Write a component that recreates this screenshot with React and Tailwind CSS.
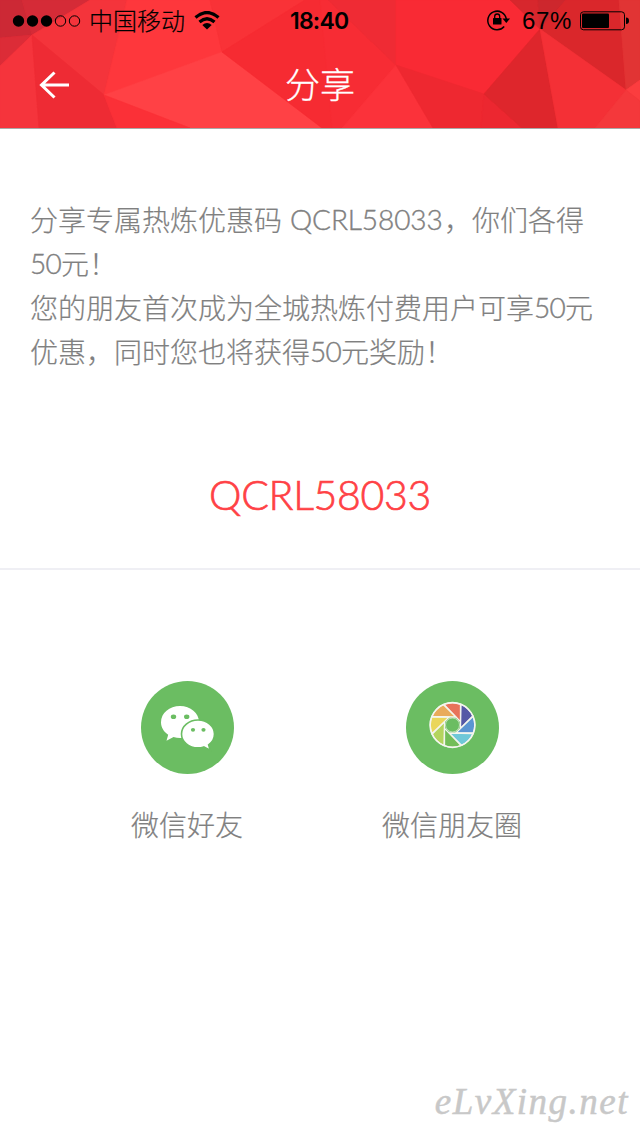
const facets = [
  {points: "0,0 22,0 32,35 0,38", fill: "#cc2935"},
  {points: "22,0 90,0 32,35", fill: "#d52b37"},
  {points: "0,38 32,35 0,66", fill: "#dc2c37"},
  {points: "0,66 32,35 39,128 0,128", fill: "#f5343c"},
  {points: "90,0 127,0 104,95 32,35", fill: "#f4343b"},
  {points: "32,35 104,95 117,128 39,128", fill: "#ee2b34"},
  {points: "127,0 210,0 222,52 104,95", fill: "#fe373c"},
  {points: "210,0 305,0 222,52", fill: "#f93237"},
  {points: "104,95 222,52 322,128 190,128", fill: "#ff4145"},
  {points: "104,95 190,128 117,128", fill: "#fb3037"},
  {points: "305,0 320,0 334,128 322,128 222,52", fill: "#f62b32"},
  {points: "320,0 328,0 396,65 342,128 332,128", fill: "#f72c34"},
  {points: "328,0 396,0 396,65", fill: "#ef2b34"},
  {points: "396,65 433,128 342,128", fill: "#fb323a"},
  {points: "396,0 510,0 540,29 484,94 396,65", fill: "#f92a34"},
  {points: "396,65 484,94 481,128 433,128", fill: "#ee2830"},
  {points: "484,94 522,128 481,128", fill: "#ec2730"},
  {points: "540,29 558,128 522,128 484,94", fill: "#de262c"},
  {points: "510,0 538,0 540,29", fill: "#d7272d"},
  {points: "538,0 566,0 540,29", fill: "#cd272d"},
  {points: "566,0 619,0 626,90 540,29", fill: "#da272b"},
  {points: "540,29 626,90 595,128 558,128", fill: "#f43036"},
  {points: "619,0 640,0 640,80 626,90", fill: "#e13434"},
  {points: "626,90 640,80 640,101", fill: "#fb3d3f"},
  {points: "626,90 640,101 640,128 595,128", fill: "#f4383b"},
];

const blades = ["#e8735a", "#5558a6", "#5b95d2", "#6fc8d8", "#72bd58", "#b4d45e", "#ead65a", "#e9ab5b"];

function StatusBar() {
  return (
    <div className="h-10 flex items-center text-black">
      <svg className="ml-3 mt-px w-[69px] h-3 shrink-0" viewBox="0 0 69 12">
        {[0, 1, 2, 3, 4].map((i) => (
          <circle
            key={i}
            cx={6.5 + i * 14}
            cy="6"
            r={i < 3 ? 5.7 : 5.2}
            fill={i < 3 ? "#000" : "none"}
            stroke="#000"
            strokeWidth={i < 3 ? 0 : 1}
          />
        ))}
      </svg>
      <span className="ml-2 w-24 text-2xl font-light whitespace-nowrap [-webkit-text-stroke:0.2px]">中国移动</span>
      <svg className="ml-[9px] w-[26px] h-[19px] shrink-0" viewBox="0 0 26 19" fill="none" stroke="#000" strokeWidth="3.2">
        <path d="M1.5 6.500Q13 -3.500 24.5 6.500" />
        <path d="M5.500 11Q13 4.500 20.500 11" />
        <path d="M8.300 14Q13 9.800 17.700 14L13 18.5Z" fill="#000" stroke="none" />
      </svg>
      <span className="ml-[70px] mt-0.5 w-[60px] font-['Inter'] font-semibold text-[23px] tracking-[-0.8px] whitespace-nowrap">
        18:40
      </span>
      <svg className="ml-[136px] w-6 h-[22px] shrink-0" viewBox="0 0 24 22">
        <path d="M18.2 17.5A9.3 9.3 0 1 1 20.3 10" fill="none" stroke="#000" strokeWidth="1.5" />
        <path d="M16.5 9.5H24L20.3 14Z" />
        <rect x="7" y="9" width="8.5" height="6.5" rx=".6" />
        <path d="M8.7 9.5V7.5a2.5 2.5 0 0 1 5 0v2" fill="none" stroke="#000" strokeWidth="1.3" />
      </svg>
      <span className="ml-3 mt-0.5 w-[51px] font-['Liberation_Sans'] text-2xl tracking-[0.6px] whitespace-nowrap">67%</span>
      <svg className="ml-[7px] mt-px w-[50px] h-5 shrink-0" viewBox="0 0 50 20">
        <rect x=".5" y=".8" width="44" height="18" rx="3" fill="none" stroke="#000" />
        <rect x="2" y="2.5" width="27" height="14.6" rx="1" />
        <path d="M46 6.5q3 0 3 3.3t-3 3.3z" />
      </svg>
    </div>
  );
}

function Header() {
  return (
    <header className="relative h-32 overflow-hidden bg-[#f52c34]">
      <svg className="absolute inset-0 w-full h-full" viewBox="0 0 640 128">
        {facets.map((f) => (
          <polygon key={f.points} points={f.points} fill={f.fill} stroke={f.fill} strokeWidth=".6" />
        ))}
      </svg>
      <div className="relative">
        <StatusBar />
        <div className="h-[88px] grid grid-cols-[1fr_auto_1fr] items-center">
          <svg className="ml-[39px] mt-px w-8 h-7" viewBox="0 0 32 28" fill="none" stroke="#fff" strokeWidth="3">
            <path d="M30 14H3M15.5 1.5L2.5 14L15.5 26.5" />
          </svg>
          <h1 className="mb-1 text-[35px] leading-none font-light text-white [-webkit-text-stroke:0.3px]">分享</h1>
        </div>
      </div>
    </header>
  );
}

function WechatIcon() {
  return (
    <svg className="w-[94px] h-[94px]" viewBox="0 0 94 94">
      <circle cx="47.5" cy="47.5" r="46.5" fill="#6bbd62" />
      <path
        d="M40 26c-10.500 0-19 7.200-19 16.200 0 5.200 2.800 9.600 7.200 12.500L26.500 60.800l7-3.700c2.100.6 4.200.9 6.500.9 10.500 0 19-7.200 19-16S50.500 26 40 26Z"
        fill="#fff"
      />
      <path
        d="M58 40c9.200 0 16.500 6.200 16.500 14 0 4.500-2.300 8.300-5.900 10.800l1.500 5.300-6.300-3.200c-1.900.6-3.800.9-5.800.9-9.200 0-16.500-6.200-16.500-13.900s7.300-13.900 16.500-13.900Z"
        fill="#fff"
        stroke="#6bbd62"
        strokeWidth="1.6"
      />
      <g fill="#6bbd62">
        <ellipse cx="33.500" cy="36.800" rx="2.700" ry="2.300" />
        <ellipse cx="46.700" cy="36.800" rx="2.700" ry="2.300" />
        <ellipse cx="53" cy="49.800" rx="2.100" ry="1.900" />
        <ellipse cx="63.500" cy="49.800" rx="2.100" ry="1.900" />
      </g>
    </svg>
  );
}

function MomentsIcon() {
  return (
    <svg className="w-[94px] h-[94px]" viewBox="0 0 94 94">
      <circle cx="47.5" cy="47.5" r="46.5" fill="#6bbd62" />
      <g transform="translate(47.5 45)">
        {blades.map((color, i) => (
          <path
            key={color}
            d="M-8.500-20.500A22.200 22.200 0 0 1 8-20.700V-3.300Z"
            transform={`rotate(${i * 45})`}
            fill={color}
            stroke="#f4f5ee"
            strokeWidth="1.300"
          />
        ))}
        <circle r="22.400" fill="none" stroke="#f4f5ee" strokeWidth="1.500" />
        <circle r="7" fill="#6bbd62" stroke="#f4f5ee" strokeWidth=".6" />
      </g>
    </svg>
  );
}

function ShareButton({icon, label}) {
  return (
    <button className="w-[140px] flex flex-col items-center">
      {icon}
      <span className="mt-[28px] text-[28px] leading-[44px] font-light text-[#808080] whitespace-nowrap [-webkit-text-stroke:0.2px]">
        {label}
      </span>
    </button>
  );
}

function Latin({children}) {
  return (
    <span className="font-['Lato'] leading-none align-[1.5px] tracking-[-0.74px] [-webkit-text-stroke:0.4px]">
      {children}
    </span>
  );
}

export default function App() {
  return (
    <div className="w-[640px] h-[1136px] flex flex-col overflow-hidden bg-white font-['Noto_Sans_CJK_SC',sans-serif]">
      <Header />
      <main className="border-t border-[#a9a9a9]">
        <section className="h-[441px] pt-[68px] border-b-2 border-[#efeff4]">
          <div className="pl-[30px] grid auto-rows-[44px] text-[28px] leading-[44px] font-light text-[#808080] whitespace-nowrap [-webkit-text-stroke:0.2px]">
            <p>
              分享专属热炼优惠码<span className="inline-block w-2" />
              <span className="inline-block w-[154px] font-['Lato'] leading-none align-[1.5px] tracking-[-0.1px] [-webkit-text-stroke:0.4px]">
                QCRL58033
              </span>
              ，你们各得
            </p>
            <p><Latin>50</Latin>元！</p>
            <p>您的朋友首次成为全城热炼付费用户可享<Latin>50</Latin>元</p>
            <p>优惠，同时您也将获得<Latin>50</Latin>元奖励！</p>
          </div>
          <p className="mt-[92px] text-center font-['Lato'] font-light text-[41px] leading-[60px] tracking-[-0.3px] text-[#ff4145] [-webkit-text-stroke:0.7px]">
            QCRL58033
          </p>
        </section>
        <section className="pt-[110px] pl-[117px] flex gap-[125px]">
          <ShareButton icon={<WechatIcon />} label="微信好友" />
          <ShareButton icon={<MomentsIcon />} label="微信朋友圈" />
        </section>
      </main>
      <footer className="mt-auto mb-2 mr-[11px] self-end font-['Liberation_Serif'] italic text-[37px] leading-[52px] tracking-[1.5px] text-[#c8c8c8] [-webkit-text-stroke:0.5px]">
        eLvXing.net
      </footer>
    </div>
  );
}
